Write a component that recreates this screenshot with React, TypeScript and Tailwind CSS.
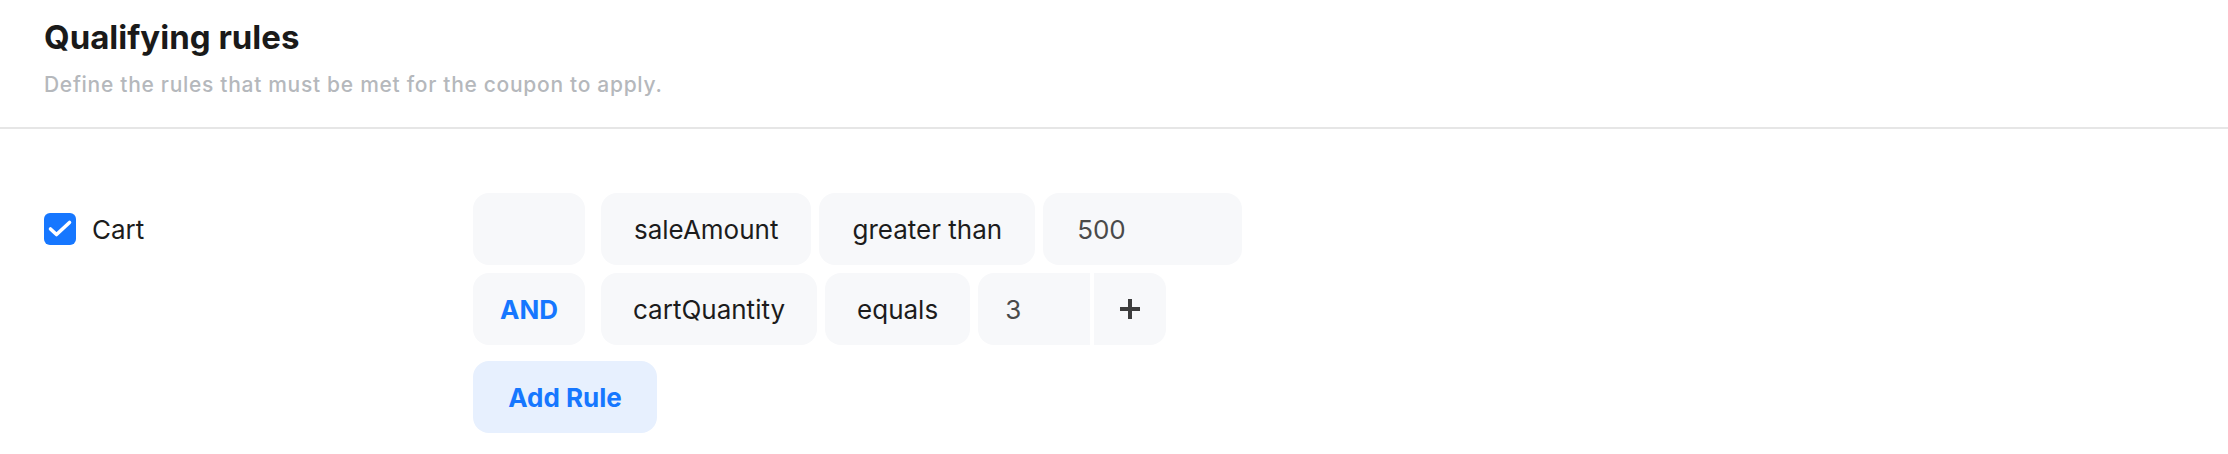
import { useState } from 'react';

const box = 'h-[72px] rounded-2xl bg-[#f7f8fa] flex items-center';

function Chip({ label, className = '' }: { label: string; className?: string }) {
  return (
    <div className={`${box} px-8 text-[26px] text-[#1c1c1c] ${className}`}>
      {label}
    </div>
  );
}

export default function App() {
  const [checked, setChecked] = useState(true);

  return (
    <div className="min-h-screen bg-white font-['Inter',sans-serif]">
      {/* header */}
      <div className="px-[44px] pt-[17px] pb-[30px] border-b-2 border-[#e6e6e6]">
        <h1 className="text-[33px] leading-[40px] font-bold text-[#1a1a1a]">
          Qualifying rules
        </h1>
        <p className="mt-4 text-[21px] leading-6 font-medium tracking-[0.7px] text-[#b5b8bc]">
          Define the rules that must be met for the coupon to apply.
        </p>
      </div>

      <div className="flex pt-16 px-[44px]">
        {/* left column */}
        <div className="w-[429px] h-[72px] flex items-center gap-4">
          <button
            onClick={() => setChecked(!checked)}
            className="w-8 h-8 rounded-[6px] bg-[#1677ff] flex items-center justify-center"
          >
            {checked && (
              <svg width="32" height="32" viewBox="0 0 32 32" fill="none">
                <polyline
                  points="6.5,16 12.5,21.5 25.5,9.5"
                  stroke="white"
                  strokeWidth="3.6"
                  strokeLinecap="round"
                  strokeLinejoin="round"
                />
              </svg>
            )}
          </button>
          <span className="text-[26px] text-[#1c1c1c]">Cart</span>
        </div>

        {/* rules */}
        <div className="flex flex-col gap-2">
          <div className="flex">
            <div className={`${box} w-[112px] mr-4`} />
            <div className="flex gap-2">
              <Chip label="saleAmount" className="px-[33px]" />
              <Chip label="greater than" className="px-[33px]" />
              <div className={`${box} w-[199px] pl-[34px] text-[26px] text-[#4a4a4a]`}>500</div>
            </div>
          </div>

          <div className="flex">
            <div className={`${box} w-[112px] mr-4 justify-center bg-[#e7f0fe] text-[26px] font-bold text-[#1677ff]`}>
              AND
            </div>
            <div className="flex gap-2">
              <Chip label="cartQuantity" />
              <Chip label="equals" />
              <div className="flex gap-1">
                <div className="h-[72px] w-[112px] rounded-l-2xl bg-[#f7f8fa] flex items-center pl-[27px] text-[26px] text-[#4a4a4a]">
                  3
                </div>
                <button className="h-[72px] w-[72px] rounded-r-2xl bg-[#f7f8fa] flex items-center justify-center">
                  <svg width="22" height="22" viewBox="0 0 22 22">
                    <path d="M11 1v20M1 11h20" stroke="#3d3d3d" strokeWidth="4" />
                  </svg>
                </button>
              </div>
            </div>
          </div>

          <button className="mt-2 h-[72px] w-[184px] rounded-2xl bg-[#e7f0fe] text-[26px] font-bold text-[#1677ff]">
            Add Rule
          </button>
        </div>
      </div>
    </div>
  );
}
